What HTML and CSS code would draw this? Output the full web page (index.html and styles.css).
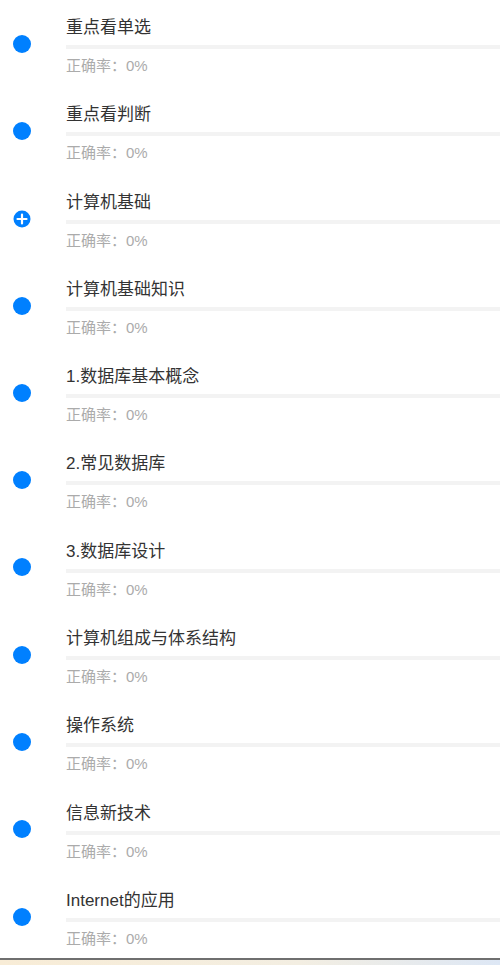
FILE: index.html
```html
<!DOCTYPE html>
<html lang="zh-CN">

<head>
  <meta charset="utf-8">
  <link rel="stylesheet" href="styles.css">
</head>

<body>
  <div class="page">
    <ul class="chapter-list">
      <li class="chapter">
        <div class="marker"><span class="dot"></span></div>
        <div class="info">
          <div class="title">重点看单选</div>
          <div class="bar"></div>
          <div class="rate">正确率：0%</div>
        </div>
      </li>
      <li class="chapter">
        <div class="marker"><span class="dot"></span></div>
        <div class="info">
          <div class="title">重点看判断</div>
          <div class="bar"></div>
          <div class="rate">正确率：0%</div>
        </div>
      </li>
      <li class="chapter">
        <div class="marker">
          <svg class="plus" viewBox="0 0 18 18" width="18" height="18">
            <circle cx="9" cy="9" r="8.5" fill="#0080ff" />
            <path d="M9 4.5v9M4.5 9h9" stroke="#fff" stroke-width="2.2" stroke-linecap="round" />
          </svg>
        </div>
        <div class="info">
          <div class="title">计算机基础</div>
          <div class="bar"></div>
          <div class="rate">正确率：0%</div>
        </div>
      </li>
      <li class="chapter">
        <div class="marker"><span class="dot"></span></div>
        <div class="info">
          <div class="title">计算机基础知识</div>
          <div class="bar"></div>
          <div class="rate">正确率：0%</div>
        </div>
      </li>
      <li class="chapter">
        <div class="marker"><span class="dot"></span></div>
        <div class="info">
          <div class="title">1.数据库基本概念</div>
          <div class="bar"></div>
          <div class="rate">正确率：0%</div>
        </div>
      </li>
      <li class="chapter">
        <div class="marker"><span class="dot"></span></div>
        <div class="info">
          <div class="title">2.常见数据库</div>
          <div class="bar"></div>
          <div class="rate">正确率：0%</div>
        </div>
      </li>
      <li class="chapter">
        <div class="marker"><span class="dot"></span></div>
        <div class="info">
          <div class="title">3.数据库设计</div>
          <div class="bar"></div>
          <div class="rate">正确率：0%</div>
        </div>
      </li>
      <li class="chapter">
        <div class="marker"><span class="dot"></span></div>
        <div class="info">
          <div class="title">计算机组成与体系结构</div>
          <div class="bar"></div>
          <div class="rate">正确率：0%</div>
        </div>
      </li>
      <li class="chapter">
        <div class="marker"><span class="dot"></span></div>
        <div class="info">
          <div class="title">操作系统</div>
          <div class="bar"></div>
          <div class="rate">正确率：0%</div>
        </div>
      </li>
      <li class="chapter">
        <div class="marker"><span class="dot"></span></div>
        <div class="info">
          <div class="title">信息新技术</div>
          <div class="bar"></div>
          <div class="rate">正确率：0%</div>
        </div>
      </li>
      <li class="chapter">
        <div class="marker"><span class="dot"></span></div>
        <div class="info">
          <div class="title">Internet的应用</div>
          <div class="bar"></div>
          <div class="rate">正确率：0%</div>
        </div>
      </li>
    </ul>
  </div>
  <div class="taskbar"></div>
</body>

</html>
```

FILE: styles.css
```css
body {
  font-family: "Liberation Sans", "Noto Sans CJK SC", sans-serif;
  background-color: #fff;
  margin: 0;
  color: #333; /* Dark gray text */
}

.page {
  height: 958px;
  overflow: hidden;
}

.chapter-list {
  list-style: none;
  margin: 0;
  padding: 0;
}

.chapter {
  display: flex;
  height: 87.3px;
}

.marker {
  width: 44px;
  flex-shrink: 0;
  display: flex;
  align-items: center;
  justify-content: center;
}

.dot {
  width: 18px;
  height: 18px;
  border-radius: 50%;
  background-color: #0080ff; /* Blue dot */
}

.plus {
  display: block;
  margin-top: 1px;
}

.info {
  flex: 1;
  margin-left: 22px;
  padding-top: 16px;
}

.title {
  font-size: 17px;
  line-height: 24px;
  color: #333;
}

.bar {
  height: 4px;
  margin-top: 5px;
  background-color: #f3f3f3; /* Empty progress track */
}

.rate {
  font-size: 15px;
  line-height: 20px;
  margin-top: 7px;
  color: #ababab; /* Light gray text */
}

.taskbar {
  height: 7px;
  border-top: 2px solid #6f6f6f;
  background: linear-gradient(to right, #f8ecd6, #f3eee2 60%, #dde7f5);
}
```
